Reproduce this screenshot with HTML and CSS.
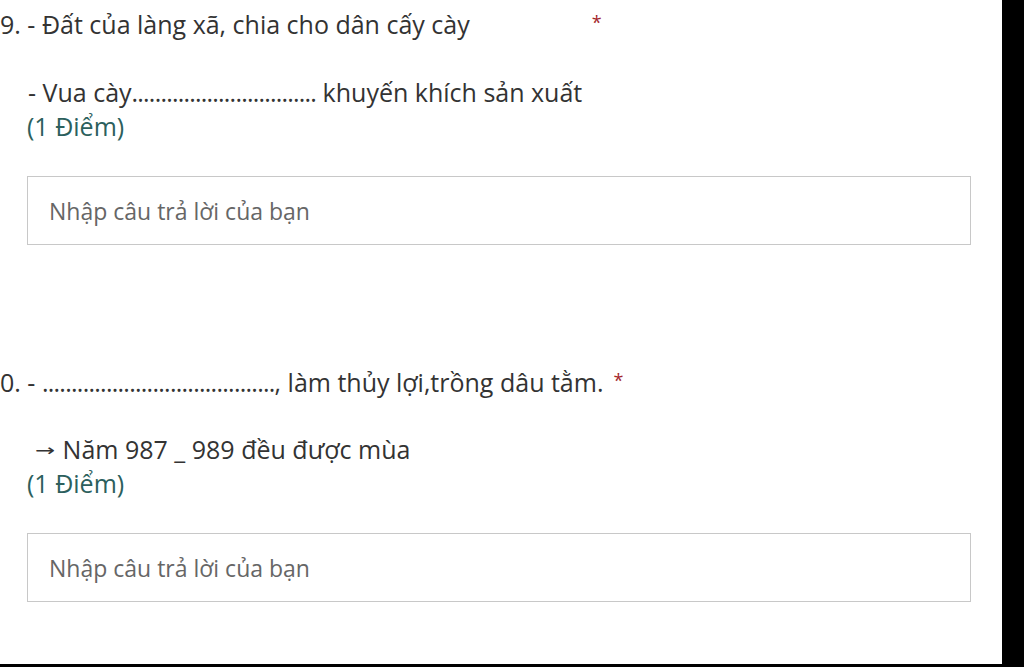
FILE: index.html
```html
<!DOCTYPE html>
<html lang="vi">
<head>
<meta charset="utf-8">
<title>Form</title>
<link rel="stylesheet" href="styles.css">
</head>
<body>
<div class="frame">
  <main class="sheet">
    <section class="question q1">
      <div class="q-title">9. - Đất của làng xã, chia cho dân cấy cày<span class="req req-far">*</span></div>
      <div class="q-sub">- Vua cày<span class="dots">................................</span> khuyến khích sản xuất</div>
      <div class="points">(1 Điểm)</div>
      <div class="answer">Nhập câu trả lời của bạn</div>
    </section>
    <section class="question q2">
      <div class="q-title">0. - <span class="dots dots-long">........................................</span>, làm thủy lợi,trồng dâu tằm.<span class="req req-near">*</span></div>
      <div class="q-sub arrow"><span class="arr">→</span> Năm 987 _ 989 đều được mùa</div>
      <div class="points">(1 Điểm)</div>
      <div class="answer">Nhập câu trả lời của bạn</div>
    </section>
  </main>
</div>
</body>
</html>
```
FILE: styles.css
```css
html, body {
  margin: 0;
  padding: 0;
  background: #000;
}
.frame {
  width: 1024px;
  height: 667px;
  overflow: hidden;
  background: #000;
}
.sheet {
  width: 1002px;
  height: 664px;
  background: #fff;
  font-family: "Open Sans", "Noto Sans", sans-serif;
  color: #333;
  box-sizing: border-box;
  padding-top: 7px;
}
.question {
  display: flex;
  flex-direction: column;
}
.q2 {
  margin-top: 120px;
}
.q-title,
.q-sub,
.points {
  font-size: 25px;
  line-height: 34px;
  height: 34px;
  white-space: nowrap;
}
.q-sub {
  padding-left: 28px;
  margin-top: 34px;
}
.q2 .q-sub {
  margin-top: 33px;
}
.q-sub.arrow {
  padding-left: 35px;
}
.arr {
  display: inline-block;
  font-family: "DejaVu Sans", sans-serif;
  font-size: 24px;
  line-height: 0;
  transform: scaleY(0.7);
  vertical-align: 1px;
  margin-right: 1px;
}
.dots {
  letter-spacing: -0.8px;
}
.dots-long {
  letter-spacing: -0.75px;
}
.points {
  padding-left: 27px;
  color: #2c5f5d;
}
.req {
  color: #a4262c;
  font-size: 18px;
  line-height: 0;
  vertical-align: 5px;
}
.req-far {
  margin-left: 122px;
}
.req-near {
  margin-left: 10px;
}
.answer {
  margin-top: 33px;
  margin-left: 27px;
  width: 944px;
  height: 69px;
  box-sizing: border-box;
  border: 1px solid #c8c8c8;
  display: flex;
  align-items: center;
  padding-left: 21px;
  font-size: 23px;
  color: #666;
}
```
